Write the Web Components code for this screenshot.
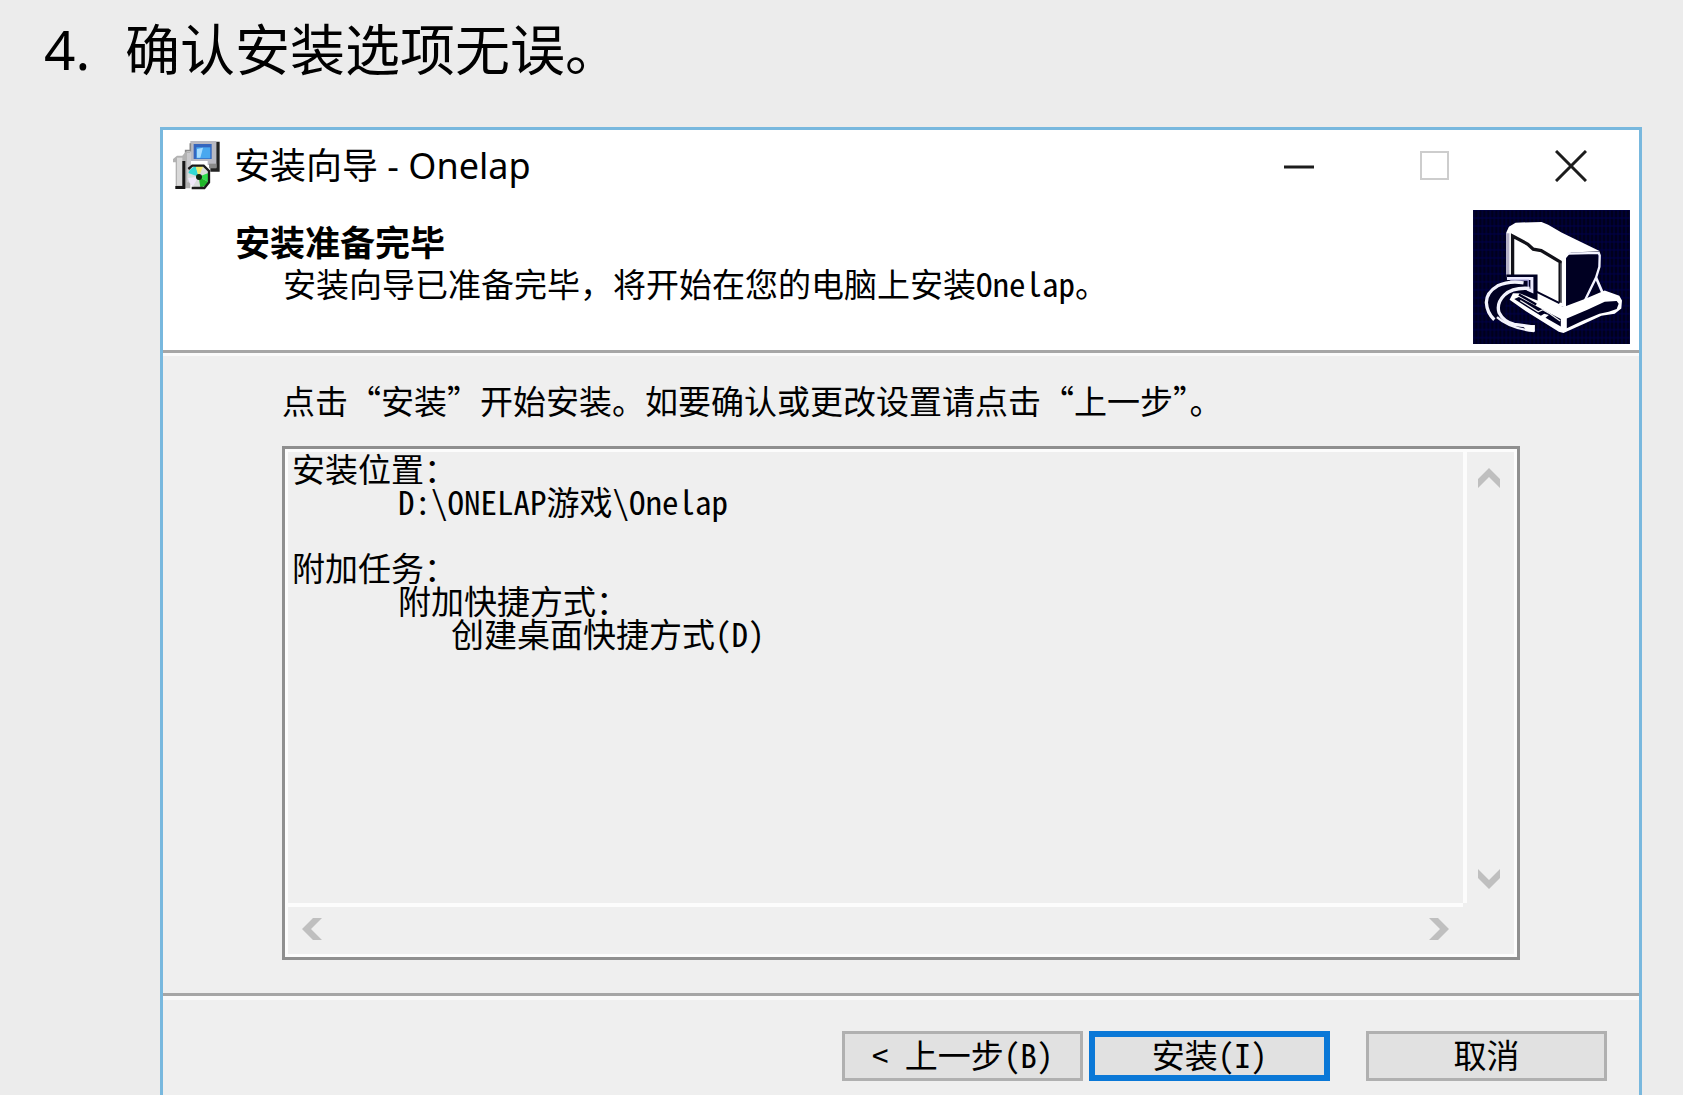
<!DOCTYPE html>
<html lang="zh-CN">
<head>
<meta charset="utf-8">
<meta name="viewport" content="width=device-width, initial-scale=1">
<title>安装向导 - Onelap</title>
<style>
  html { overflow: hidden; }
  body {
    margin: 0;
    background: #ececec;
    color: #000;
    --face: #efefef;
    --line: #a6a6a6;
    --dialog-font: "Noto Sans Mono CJK SC", "Noto Sans CJK SC", sans-serif;
    font-family: "Noto Sans", "Noto Sans CJK SC", sans-serif;
  }
</style>
</head>
<body>

<guide-step number="4.">
  <span slot="title">确认安装选项无误。</span>
  <setup-window caption="安装向导 - Onelap">
    <setup-header heading="安装准备完毕">安装向导已准备完毕，将开始在您的电脑上安装Onelap。</setup-header>
    <setup-summary label="点击“安装”开始安装。如要确认或更改设置请点击“上一步”。">安装位置：
		D:\ONELAP游戏\Onelap

附加任务：
		附加快捷方式：
			创建桌面快捷方式(D)</setup-summary>
    <setup-actions slot="footer">
      <setup-button>&lt; 上一步(B)</setup-button>
      <setup-button primary>安装(I)</setup-button>
      <setup-button class="cancel">取消</setup-button>
    </setup-actions>
  </setup-window>
</guide-step>

<script>
function attach(el, html) {
  const root = el.attachShadow({ mode: 'open' });
  const template = document.createElement('template');
  template.innerHTML = html;
  root.appendChild(template.content.cloneNode(true));
  return root;
}

// Numbered step of the guide with its illustration below
class GuideStep extends HTMLElement {
  constructor() {
    super();
    const root = attach(this, `
      <style>
        :host { display: block; padding: 16px 41px 0 44px; }
        h1 { display: grid; grid-template-columns: 81px 1fr; margin: 0 0 45px;
             font-size: 55px; line-height: 66px; font-weight: 400; }
        .figure { padding-left: 116px; }
      </style>
      <h1><span class="number"></span><slot name="title"></slot></h1>
      <div class="figure"><slot></slot></div>
    `);
    root.querySelector('.number').textContent = this.getAttribute('number');
  }
}
customElements.define('guide-step', GuideStep);

// Window frame: caption bar, content, footer
class SetupWindow extends HTMLElement {
  constructor() {
    super();
    const root = attach(this, `
      <style>
        :host { display: block; border: 3px solid #78b8de; background: var(--face); }
        .bar { display: flex; align-items: center; padding: 0 0 2px 10px; background: #fff; }
        .logo { width: 48px; height: 49px; flex: none; }
        .caption { flex: 1; margin-left: 13px; font: 36px/48px "Noto Sans", "Noto Sans CJK SC", sans-serif; }
        button { width: 136px; height: 71px; padding: 0; border: 0; background: none; color: #1c1c1c; }
        button:disabled { color: #cdcdcd; }
        button svg { display: block; margin: auto; }
      </style>
      <div class="bar">
        <svg class="logo" viewBox="38 48 144 147" aria-hidden="true">
          <path d="M90 48h78v72h-26v-12H90z" fill="#b9b9c2"/>
          <path d="M168 50h10v90h-10l-18 0v-12h18z" fill="#222"/>
          <path d="M146 116h22v14h-22z" fill="#888"/>
          <path d="M100 57h54v45h-54z" fill="#3465bf"/>
          <path d="M108 67h42v33h-42z" fill="#4aa8ef"/>
          <path d="M110 72l18-4-8 30h-10z" fill="#a6dcff"/>
          <path d="M90 55v22H76v12" fill="none" stroke="#888" stroke-width="5"/>
          <path d="M38 102l12-10h16l10-12h14v110H46v-78h-8z" fill="#b2b2b2"/>
          <path d="M50 98h16v84H50z" fill="#d9d9d9"/>
          <path d="M66 108h9v78h-9zM45 183h30v9H45z" fill="#161616"/>
          <path d="M80 84h12v88H80z" fill="#c9c9cc"/>
          <circle cx="115" cy="155" r="33" fill="#d8dcdc"/>
          <path d="M115 155L84 144a33 33 0 0 1 22-20z" fill="#32d9d4"/>
          <path d="M115 155l-9-31a33 33 0 0 1 22 1z" fill="#eee96a"/>
          <path d="M115 155l31-12a33 33 0 0 1-2 28z" fill="#2fdc4c"/>
          <path d="M115 155l29 16a33 33 0 0 1-24 16z" fill="#20b62a"/>
          <path d="M115 155l-31 4a33 33 0 0 0 14 24z" fill="#f0e8fa"/>
          <path d="M84 132l12-10h34l16 16v34l-14 17H94" fill="none" stroke="#1a1a1a" stroke-width="7"/>
          <circle cx="116" cy="156" r="9" fill="#10260f"/>
        </svg>
        <span class="caption"></span>
        <button type="button" aria-label="最小化">
          <svg width="32" height="32" viewBox="0 0 32 32"><path d="M1 17h30" stroke="currentColor" stroke-width="3"/></svg>
        </button>
        <button type="button" aria-label="最大化" disabled>
          <svg width="32" height="32" viewBox="0 0 32 32"><path d="M2 2h27v27H2z" fill="none" stroke="currentColor" stroke-width="2"/></svg>
        </button>
        <button type="button" aria-label="关闭">
          <svg width="32" height="32" viewBox="0 0 32 32"><path d="M1 1l30 30M31 1L1 31" stroke="currentColor" stroke-width="3"/></svg>
        </button>
      </div>
      <slot></slot>
      <slot name="footer"></slot>
    `);
    root.querySelector('.caption').textContent = this.getAttribute('caption');
  }
}
customElements.define('setup-window', SetupWindow);

class SetupHeader extends HTMLElement {
  constructor() {
    super();
    const root = attach(this, `
      <style>
        :host { display: flex; justify-content: space-between; padding: 7px 9px 6px 72px;
                background: #fff; border-bottom: 3px solid var(--line);
                font-family: var(--dialog-font); }
        .text { padding-top: 13px; }
        h2 { margin: 0; font: 700 35px/42px "Liberation Sans", "Noto Sans CJK SC", sans-serif; }
        p { margin: 0 0 0 48px; font-size: 33px; line-height: 36px; }
        svg { display: block; flex: none; width: 157px; height: 134px; }
      </style>
      <div class="text"><h2></h2><p><slot></slot></p></div>
      <svg viewBox="38 30 472 403" aria-hidden="true">
        <defs>
          <pattern id="dither" width="12" height="24" patternUnits="userSpaceOnUse">
            <rect width="12" height="24" fill="#00001c"/>
            <path d="M0 6h12M6 0v24" stroke="#00004a" stroke-width="3"/>
          </pattern>
        </defs>
        <rect x="38" y="30" width="472" height="403" fill="url(#dither)"/>
        <!-- monitor -->
        <path d="M138 232V98l8-18 20-12 78-2 20 8 40 24 54 26 62 30-88 4-14 16v150l-40-12-80-42V232z" fill="#fff"/>
        <path d="M143 232V100" stroke="#b4b0c8" stroke-width="9"/>
        <path d="M157 236V108l46 25 16 15 24 4 57 34v122" fill="none" stroke="#111118" stroke-width="10"/>
        <path d="M303 190v120" stroke="#77777f" stroke-width="4"/>
        <path d="M318 176l12-12h80l4 12-2 46-14 22-28 58-52 22z" fill="#000022"/>
        <path d="M322 161l94-2 3 8-1 34-10 32-34 70" fill="none" stroke="#f4f4ff" stroke-width="7"/>
        <path d="M408 234l20 46 8 14" fill="none" stroke="#f4f4ff" stroke-width="8"/>
        <path d="M406 252l-18 46 36-14z" fill="#000022"/>
        <!-- base -->
        <path d="M222 282l88 40 64-24 60-26 44 16 8 14-2 24-20 16-40 6-52 24-62 28-14-4-100-62-48-34 10-20z" fill="#fff"/>
        <path d="M320 356l62-26 52-24 36-2 6 8-6 16-24 8-28 6-52 22-46 22z" fill="#000022"/>
        <path d="M302 358v22l-46-26 10-8-14-4-10 6-80-50 14-6 66 34 14 8z" fill="#000022"/>
        <path d="M176 284l52 30" stroke="#000022" stroke-width="7"/>
        <path d="M230 276l68 34" stroke="#000022" stroke-width="6"/>
        <path d="M180 302l54 34 14-6 18 10 34 24" fill="none" stroke="#eee" stroke-width="4"/>
        <!-- arrow -->
        <path d="M138 224h94v78l-22-8-50-22-24 34-2 56-28-2-24-32-4-34 24-34 36-20z" fill="#000022"/>
        <path d="M140 236h75v38l-14-6" fill="none" stroke="#eceaff" stroke-width="9"/>
        <path d="M150 241h54v22" fill="none" stroke="#a8a4dc" stroke-width="4"/>
        <path d="M190 249Q146 242 112 258Q78 278 78 308Q80 340 102 360" fill="none" stroke="#f2f2fc" stroke-width="10"/>
        <path d="M208 266Q158 262 132 286Q108 310 116 338Q130 366 162 374L222 382" fill="none" stroke="#f2f2fc" stroke-width="10"/>
        <path d="M110 352Q148 386 222 394" fill="none" stroke="#f2f2fc" stroke-width="7"/>
        <path d="M188 378l36-2v20l-26-4z" fill="#fff"/>
      </svg>
    `);
    root.querySelector('h2').textContent = this.getAttribute('heading');
  }
}
customElements.define('setup-header', SetupHeader);

// Read-only memo with disabled scroll bars
class SetupSummary extends HTMLElement {
  constructor() {
    super();
    const root = attach(this, `
      <style>
        :host { display: block; padding: 28px 119px 33px; border-top: 3px solid #fafafa;
                font-family: var(--dialog-font); }
        label { display: block; margin-bottom: 29px; font-size: 33px; line-height: 33px; }
        .memo { display: grid; grid-template-columns: 1fr 51px; grid-template-rows: auto 51px;
                border: 3px solid #8f8f8f; outline: 3px solid #fcfcfc; outline-offset: -6px; padding: 3px; }
        textarea { display: block; box-sizing: border-box; width: 100%; height: 451px; margin: 0;
                   padding: 0 4px; border: 0; outline: 0; resize: none; overflow: hidden;
                   background: none; color: inherit; font: 33px/33px var(--dialog-font);
                   white-space: pre; tab-size: 53px; }
        .bar { display: flex; justify-content: space-between; }
        .vertical { flex-direction: column; padding-top: 2px; box-shadow: inset 4px 0 #fcfcfc; }
        .horizontal { box-shadow: inset 0 4px #fcfcfc; }
        .vertical button { width: 51px; height: 48px; }
        .horizontal button { width: 48px; height: 51px; }
        button { padding: 0; border: 0; background: none; color: #bfbfbf; }
        button svg { display: block; margin: auto; }
        path { fill: currentColor; }
      </style>
      <label for="memo"></label>
      <div class="memo">
        <textarea id="memo" readonly></textarea>
        <div class="bar vertical">
          <button type="button" disabled aria-label="向上"><svg width="22" height="20"><path d="M0 11L11 0l11 11v9L11 9 0 20z"/></svg></button>
          <button type="button" disabled aria-label="向下"><svg width="22" height="20"><path d="M0 0l11 11L22 0v9L11 20 0 9z"/></svg></button>
        </div>
        <div class="bar horizontal">
          <button type="button" disabled aria-label="向左"><svg width="20" height="22"><path d="M11 0h9L9 11l11 11h-9L0 11z"/></svg></button>
          <button type="button" disabled aria-label="向右"><svg width="20" height="22"><path d="M0 0h9l11 11L9 22H0l11-11z"/></svg></button>
        </div>
      </div>
    `);
    root.querySelector('label').textContent = this.getAttribute('label');
    root.querySelector('textarea').value = this.textContent;
  }
}
customElements.define('setup-summary', SetupSummary);

class SetupActions extends HTMLElement {
  constructor() {
    super();
    attach(this, `
      <style>
        :host { display: flex; justify-content: flex-end; gap: 6px; padding: 35px 32px 32px;
                border-top: 3px solid var(--line); box-shadow: inset 0 4px #fafafa; }
        ::slotted(.cancel) { margin-left: 30px; }
      </style>
      <slot></slot>
    `);
  }
}
customElements.define('setup-actions', SetupActions);

class SetupButton extends HTMLElement {
  constructor() {
    super();
    attach(this, `
      <style>
        :host { display: block; }
        button { display: block; width: 241px; height: 50px; padding: 0 0 4px; border: 3px solid #b0b0b0;
                 background: #e1e1e1; color: #000; font: 33px/33px var(--dialog-font); white-space: nowrap; }
        :host([primary]) button { border: 6px solid #0a78d7; }
      </style>
      <button type="button"><slot></slot></button>
    `);
  }
}
customElements.define('setup-button', SetupButton);
</script>
</body>
</html>
